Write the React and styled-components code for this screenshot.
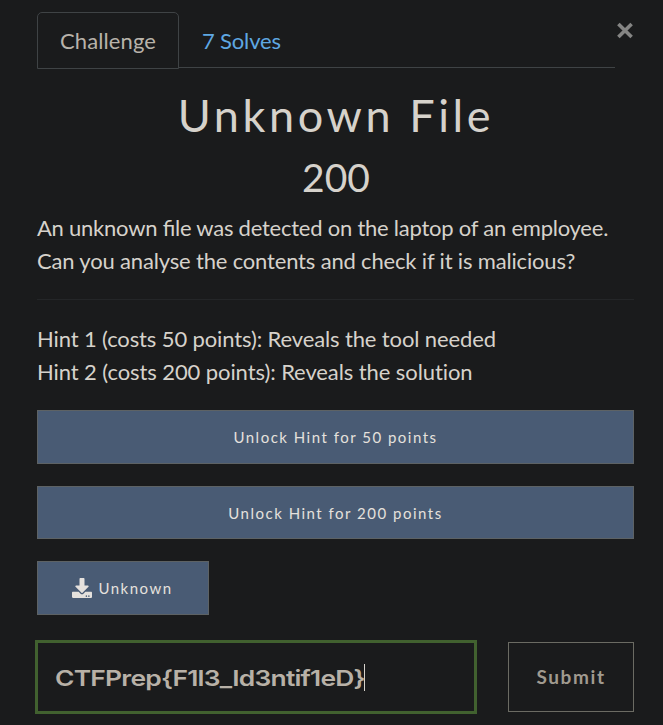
import React from 'react';
import styled, { createGlobalStyle } from 'styled-components';
import { FaDownload } from 'react-icons/fa';

const GlobalStyle = createGlobalStyle`
  * { box-sizing: border-box; }
  body {
    margin: 0;
    background: #1a1b1c;
    color: #d6d2cb;
    font: 22px/33px Lato, "Open Sans", sans-serif;
    overflow: hidden;
  }
  button { font-family: inherit; cursor: pointer; }
`;

const Modal = styled.main`
  width: 663px;
  height: 725px;
  padding: 12px 29px 0 37px;
`;

const Header = styled.header`
  display: flex;
  align-items: flex-start;
  height: 57px;
`;

const Tabs = styled.nav`
  display: flex;
  width: 578px;
  height: 56px;
  border-bottom: 1px solid #3f4345;
`;

const Tab = styled.a`
  height: 57px;
  padding: 11px 22px 0;
  border: 1px solid ${p => (p.$active ? '#3f4345' : 'transparent')};
  border-radius: 5px 5px 0 0;
  background: ${p => (p.$active ? '#1a1b1c' : 'transparent')};
  color: ${p => (p.$active ? '#b8b3aa' : '#5fa8e2')};
  letter-spacing: ${p => (p.$active ? 0.1 : -0.15)}px;
`;

const Close = styled.button`
  display: flex;
  margin: 10px 0 0 1px;
  padding: 0;
  border: 0;
  background: none;
  color: #858584;
`;

const Title = styled.h2`
  margin: 19px -1px 0 0;
  font-size: 45px;
  font-weight: 400;
  line-height: 54px;
  letter-spacing: 3.6px;
  text-align: center;
`;

const Points = styled.h3`
  margin: 12px 0 0 1px;
  font-size: 39px;
  font-weight: 400;
  line-height: 46px;
  text-align: center;
`;

const Text = styled.p`
  margin: ${p => p.$top}px 0 0;
  white-space: nowrap;
`;

const Line = styled.span`
  display: block;
  letter-spacing: ${p => p.$tracking}px;
  font-feature-settings: "liga" ${p => (p.$ligatures ? 1 : 0)};
`;

const Rule = styled.hr`
  height: 1px;
  margin: 22px 0 0;
  border: 0;
  background: #242628;
`;

const Action = styled.button`
  display: flex;
  align-items: center;
  justify-content: center;
  gap: 6px;
  width: ${p => p.$width || '100%'};
  height: ${p => p.$height || 54}px;
  margin-top: ${p => p.$top}px;
  padding: 0;
  border: 1px solid #5d6264;
  background: #495b74;
  color: #e5e1dd;
  font-size: 15px;
  letter-spacing: 1.5px;
`;

const DownloadAction = styled(Action)`
  padding-right: 1px;
`;

const AnswerRow = styled.form`
  display: flex;
  align-items: center;
  justify-content: space-between;
  margin: 25px 0 0 -2px;
`;

const Answer = styled.div`
  display: flex;
  align-items: center;
  width: 442px;
  height: 74px;
  padding: 1px 0 0 17px;
  border: 3px solid #41612f;
  color: #b8b1a7;
`;

const Flag = styled.span`
  width: 309px;
  font: 600 22px/30px Inter, "Liberation Sans", sans-serif;
  letter-spacing: -0.65px;
  white-space: nowrap;
`;

const FlagText = styled.span`
  display: inline-block;
  transform: scaleX(1.2);
  transform-origin: left;
`;

const Caret = styled.span`
  width: 1px;
  height: 27px;
  background: #d6d2cb;
`;

const Submit = styled.button`
  width: 126px;
  height: 70px;
  padding: 0 0 2px;
  border: 1px solid #6b6b63;
  background: transparent;
  color: #a09a8f;
  font-size: 19px;
  font-weight: 700;
  letter-spacing: 1.6px;
`;

export default function App() {
  return (
    <Modal>
      <GlobalStyle />
      <Header>
        <Tabs>
          <Tab $active>Challenge</Tab>
          <Tab>7 Solves</Tab>
        </Tabs>
        <Close type="button" aria-label="Close">
          <svg width="18" height="17" viewBox="0 0 18 17" fill="none" stroke="currentColor" strokeWidth="3.6">
            <path d="M2.4 1.9 15.6 15.1M15.6 1.9 2.4 15.1" />
          </svg>
        </Close>
      </Header>
      <Title>Unknown File</Title>
      <Points>200</Points>
      <Text $top={11}>
        <Line $tracking={-0.235} $ligatures>An unknown file was detected on the laptop of an employee.</Line>
        <Line $tracking={-0.17}>Can you analyse the contents and check if it is malicious?</Line>
      </Text>
      <Rule />
      <Text $top={22}>
        <Line $tracking={-0.125}>Hint 1 (costs 50 points): Reveals the tool needed</Line>
        <Line $tracking={-0.09}>Hint 2 (costs 200 points): Reveals the solution</Line>
      </Text>
      <Action $top={22}>Unlock Hint for 50 points</Action>
      <Action $top={22} $height={53}>Unlock Hint for 200 points</Action>
      <DownloadAction $top={22} $width="172px">
        <FaDownload size={20} />
        Unknown
      </DownloadAction>
      <AnswerRow>
        <Answer>
          <Flag><FlagText>{'CTFPrep{F1l3_Id3ntif1eD}'}</FlagText></Flag>
          <Caret />
        </Answer>
        <Submit type="button">Submit</Submit>
      </AnswerRow>
    </Modal>
  );
}
